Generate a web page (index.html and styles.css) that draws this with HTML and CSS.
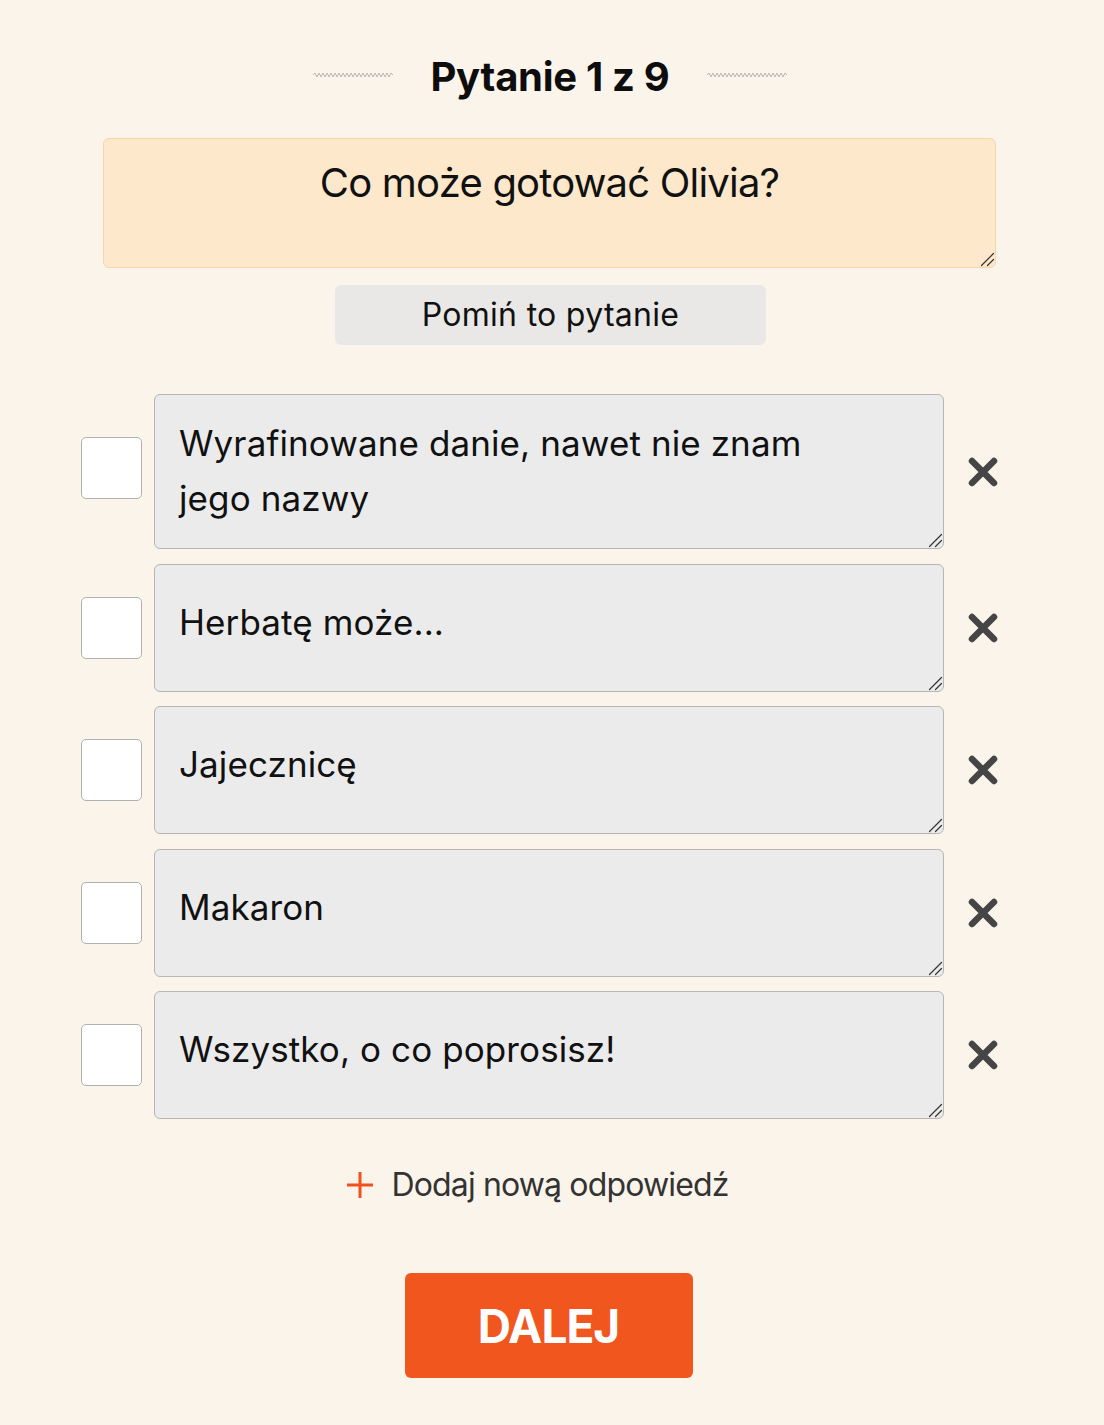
FILE: index.html
```html
<!DOCTYPE html>
<html lang="pl">
<head>
<meta charset="utf-8">
<title>Pytanie 1 z 9</title>
<link rel="stylesheet" href="styles.css">
</head>
<body>
<main class="page">
  <header class="title-row">
    <svg class="wave" width="80" height="6" viewBox="0 0 80 6"><path d="M0 3 L2 1 L4 5 L6 1 L8 5 L10 1 L12 5 L14 1 L16 5 L18 1 L20 5 L22 1 L24 5 L26 1 L28 5 L30 1 L32 5 L34 1 L36 5 L38 1 L40 5 L42 1 L44 5 L46 1 L48 5 L50 1 L52 5 L54 1 L56 5 L58 1 L60 5 L62 1 L64 5 L66 1 L68 5 L70 1 L72 5 L74 1 L76 5 L78 1 L80 3" fill="none" stroke="#a9a6a2" stroke-width="0.8"/></svg>
    <h1 class="title">Pytanie 1 z 9</h1>
    <svg class="wave" width="80" height="6" viewBox="0 0 80 6"><path d="M0 3 L2 1 L4 5 L6 1 L8 5 L10 1 L12 5 L14 1 L16 5 L18 1 L20 5 L22 1 L24 5 L26 1 L28 5 L30 1 L32 5 L34 1 L36 5 L38 1 L40 5 L42 1 L44 5 L46 1 L48 5 L50 1 L52 5 L54 1 L56 5 L58 1 L60 5 L62 1 L64 5 L66 1 L68 5 L70 1 L72 5 L74 1 L76 5 L78 1 L80 3" fill="none" stroke="#a9a6a2" stroke-width="0.8"/></svg>
  </header>

  <textarea class="question">Co może gotować Olivia?</textarea>

  <button class="skip" type="button">Pomiń to pytanie</button>

  <section class="answers">
    <div class="answer answer--tall">
      <span class="check"></span>
      <textarea class="answer-text answer-text--tall">Wyrafinowane danie, nawet nie znam
jego nazwy</textarea>
      <svg class="remove" width="30" height="30" viewBox="0 0 30 30"><path d="M4 4 L26 26 M26 4 L4 26" stroke="#454545" stroke-width="6.5" stroke-linecap="round"/></svg>
    </div>
    <div class="answer">
      <span class="check"></span>
      <textarea class="answer-text">Herbatę może...</textarea>
      <svg class="remove" width="30" height="30" viewBox="0 0 30 30"><path d="M4 4 L26 26 M26 4 L4 26" stroke="#454545" stroke-width="6.5" stroke-linecap="round"/></svg>
    </div>
    <div class="answer">
      <span class="check"></span>
      <textarea class="answer-text">Jajecznicę</textarea>
      <svg class="remove" width="30" height="30" viewBox="0 0 30 30"><path d="M4 4 L26 26 M26 4 L4 26" stroke="#454545" stroke-width="6.5" stroke-linecap="round"/></svg>
    </div>
    <div class="answer">
      <span class="check"></span>
      <textarea class="answer-text">Makaron</textarea>
      <svg class="remove" width="30" height="30" viewBox="0 0 30 30"><path d="M4 4 L26 26 M26 4 L4 26" stroke="#454545" stroke-width="6.5" stroke-linecap="round"/></svg>
    </div>
    <div class="answer">
      <span class="check"></span>
      <textarea class="answer-text">Wszystko, o co poprosisz!</textarea>
      <svg class="remove" width="30" height="30" viewBox="0 0 30 30"><path d="M4 4 L26 26 M26 4 L4 26" stroke="#454545" stroke-width="6.5" stroke-linecap="round"/></svg>
    </div>
  </section>

  <button class="add" type="button">
    <svg class="plus" width="28" height="28" viewBox="0 0 28 28"><path d="M14 1 V27 M1 14 H27" stroke="#f0521e" stroke-width="3"/></svg>
    <span>Dodaj nową odpowiedź</span>
  </button>

  <button class="next" type="button">DALEJ</button>
</main>
</body>
</html>
```

FILE: styles.css
```css
html, body {
  margin: 0;
  padding: 0;
  background: #fbf4ea;
}

body {
  font-family: Inter, "Noto Sans", "Liberation Sans", sans-serif;
  color: #111;
}

.page {
  width: 1104px;
  min-height: 1425px;
  display: flex;
  flex-direction: column;
  align-items: center;
  box-sizing: border-box;
  padding-top: 53px;
}

.title-row {
  display: flex;
  align-items: center;
  gap: 38px;
  margin-right: 4px;
}

.wave {
  display: block;
  margin-top: -4px;
}

.title {
  margin: 0;
  font-size: 40px;
  line-height: 48px;
  font-weight: 700;
  color: #0d0d0d;
  letter-spacing: -0.3px;
}

textarea::-webkit-scrollbar {
  width: 18px;
  height: 18px;
  background: transparent;
}

textarea::-webkit-resizer {
  background-color: transparent;
  background-image: url("data:image/svg+xml;utf8,<svg xmlns='http://www.w3.org/2000/svg' width='18' height='18' viewBox='0 0 18 18'><path d='M3 15 L15 3 M9 15 L15 9' stroke='%23333' stroke-width='1.2' stroke-linecap='round'/></svg>");
  background-repeat: no-repeat;
  background-position: center;
}

.question {
  box-sizing: border-box;
  width: 893px;
  height: 130px;
  margin-top: 37px;
  margin-right: 5px;
  padding: 20px 20px 0;
  background: #fde8cc;
  border: 1px solid #f6d6a9;
  border-radius: 6px;
  font-family: Inter, "Noto Sans", sans-serif;
  font-size: 40px;
  line-height: 48px;
  letter-spacing: -0.8px;
  color: #111;
  text-align: center;
  outline: none;
  display: block;
  overflow: hidden;
}

.skip {
  box-sizing: border-box;
  width: 431px;
  height: 60px;
  margin-top: 17px;
  margin-right: 3px;
  background: #e9e8e6;
  border: none;
  border-radius: 6px;
  font-family: Inter, "Noto Sans", sans-serif;
  font-size: 32px;
  line-height: 40px;
  letter-spacing: 0.3px;
  color: #111;
  padding: 0;
}

.answers {
  display: flex;
  flex-direction: column;
  gap: 14.5px;
  margin-top: 49px;
  margin-right: 25px;
}

.answer {
  display: flex;
  align-items: center;
}

.answer--tall .check {
  margin-bottom: 8px;
}

.check {
  box-sizing: border-box;
  width: 61px;
  height: 62px;
  background: #fff;
  border: 1px solid #b3b1ae;
  border-radius: 5px;
  flex: none;
}

.answer-text {
  box-sizing: border-box;
  display: block;
  width: 790px;
  height: 128px;
  margin-left: 12px;
  padding: 30px 24px 0;
  background: #ebebeb;
  border: 1px solid #b7b6b4;
  border-radius: 6px;
  font-family: Inter, "Noto Sans", sans-serif;
  font-size: 35px;
  line-height: 55px;
  letter-spacing: 0.1px;
  color: #111;
  outline: none;
  overflow: hidden;
}

.answer-text--tall {
  height: 155px;
  padding-top: 21px;
}

.remove {
  display: block;
  flex: none;
  margin-left: 24px;
}

.add {
  display: flex;
  align-items: center;
  gap: 17px;
  margin-top: 46px;
  margin-right: 29px;
  background: none;
  border: none;
  padding: 0;
  font-family: Inter, "Noto Sans", sans-serif;
  font-size: 32px;
  line-height: 40px;
  letter-spacing: -0.85px;
  color: #333;
}

.plus {
  display: block;
}

.next {
  box-sizing: border-box;
  width: 288px;
  height: 105px;
  margin-top: 68px;
  margin-right: 7px;
  background: #f1561f;
  border: none;
  border-radius: 6px;
  font-family: Inter, "Noto Sans", sans-serif;
  font-size: 46px;
  font-weight: 700;
  letter-spacing: -1px;
  color: #fff;
  padding: 0;
}
```
